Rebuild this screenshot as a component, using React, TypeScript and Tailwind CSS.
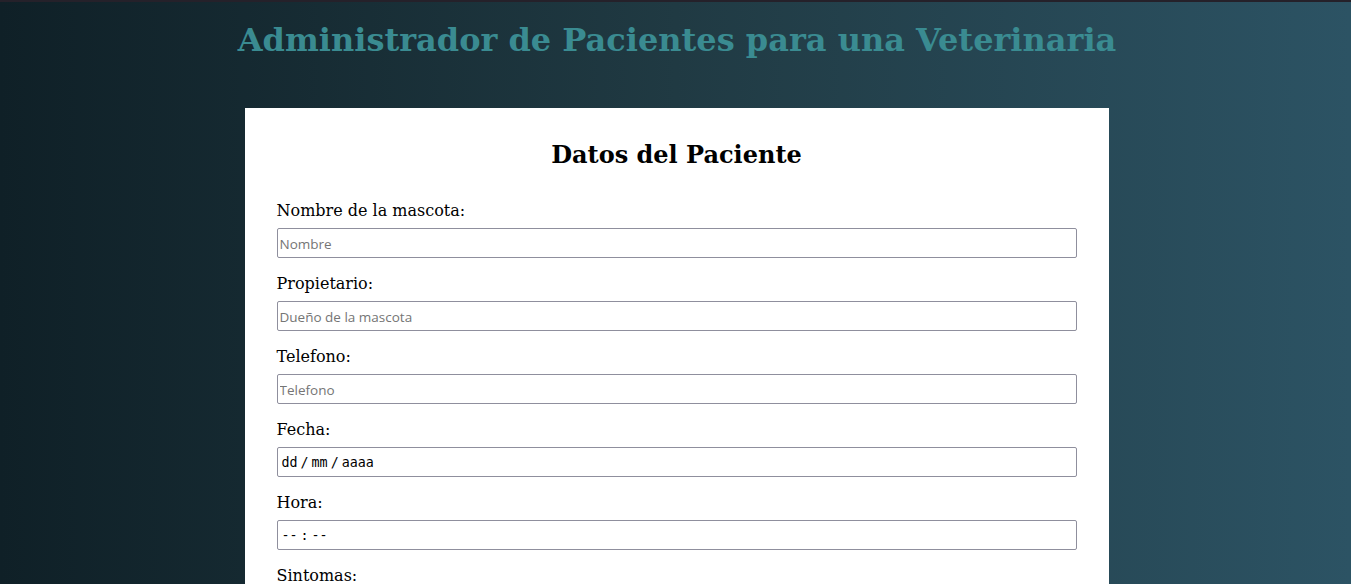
import React from "react";

const serif = { fontFamily: '"DejaVu Serif", serif' };

function Label({ children }: { children: React.ReactNode }) {
  return (
    <label className="block h-[22px] text-[16px] leading-[24px] text-black" style={serif}>
      {children}
    </label>
  );
}

function Field({ label, placeholder }: { label: string; placeholder: string }) {
  return (
    <div className="flex flex-col">
      <Label>{label}</Label>
      <input
        type="text"
        placeholder={placeholder}
        className="mt-[7px] mb-[14px] block h-[30px] w-full rounded-[2px] border border-[#8f8f9d] bg-white px-[2px] pt-[2px] text-[13.5px] text-black outline-none placeholder:text-[#757575] font-['Open_Sans',sans-serif]"
      />
    </div>
  );
}

function FakeInput({ children }: { children: React.ReactNode }) {
  return (
    <div className="mt-[7px] mb-[14px] flex h-[30px] w-full items-center rounded-[2px] border border-[#8f8f9d] bg-white px-[4px] pt-[1px] text-[13.33px] text-black font-['DejaVu_Sans_Mono',monospace]">
      {children}
    </div>
  );
}

export default function App() {
  return (
    <div className="min-h-screen overflow-hidden border-t-2 border-[#25212a] bg-linear-to-r from-[#0f2027] via-[#203a43] to-[#2c5364] pl-[2px]">
      <h1
        className="mt-[20px] pl-[1px] text-center text-[32px] font-bold leading-[37px] text-[#3a8b91]"
        style={serif}
      >
        Administrador de Pacientes para una Veterinaria
      </h1>
      <div className="mx-auto mt-[49px] w-[864px] bg-white px-8 pt-[33px] pb-8">
        <h2 className="mb-[30px] text-center text-[24px] font-bold leading-[28px] text-black" style={serif}>
          Datos del Paciente
        </h2>
        <form className="flex flex-col">
          <Field label="Nombre de la mascota:" placeholder="Nombre" />
          <Field label="Propietario:" placeholder="Dueño de la mascota" />
          <Field label="Telefono:" placeholder="Telefono" />
          <div className="flex flex-col">
            <Label>Fecha:</Label>
            <FakeInput>
              <span>dd</span>
              <span className="px-[3px]">/</span>
              <span>mm</span>
              <span className="px-[3px]">/</span>
              <span>aaaa</span>
            </FakeInput>
          </div>
          <div className="flex flex-col">
            <Label>Hora:</Label>
            <FakeInput>
              <span>--</span>
              <span className="px-[3px]">:</span>
              <span>--</span>
            </FakeInput>
          </div>
          <div className="flex flex-col">
            <Label>Sintomas:</Label>
            <textarea className="mt-[7px] block h-[80px] w-full rounded-[2px] border border-[#8f8f9d]" />
          </div>
        </form>
      </div>
    </div>
  );
}
